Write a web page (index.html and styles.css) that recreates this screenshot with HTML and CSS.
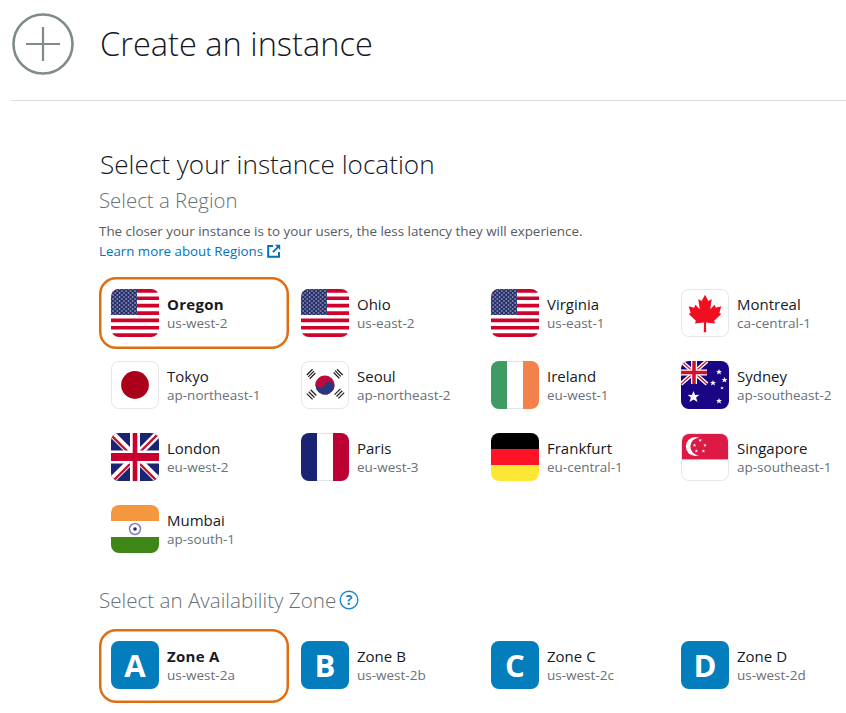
FILE: index.html
```html
<!DOCTYPE html>
<html lang="en">
<head>
<meta charset="utf-8">
<title>Create an instance</title>
<link rel="stylesheet" href="styles.css">
</head>
<body>
<svg class="defs" width="0" height="0" aria-hidden="true">
  <defs>
    <pattern id="stars" x="1" y="1" width="4.4" height="4" patternUnits="userSpaceOnUse">
      <circle cx="1" cy="1" r=".75" fill="#c9cde0"/>
      <circle cx="3.2" cy="3" r=".75" fill="#c9cde0"/>
    </pattern>
    <symbol id="us" viewBox="0 0 48 48">
      <rect width="48" height="48" fill="#fff"/>
      <path fill="#d0022b" d="M0 0h48v3.7H0zM0 7.4h48v3.7H0zM0 14.8h48v3.7H0zM0 22.2h48v3.7H0zM0 29.5h48v3.7H0zM0 36.9h48v3.7H0zM0 44.3h48V48H0z"/>
      <rect width="26" height="26" fill="#27306b"/>
      <rect width="26" height="26" fill="url(#stars)"/>
    </symbol>
    <polygon id="star" points="0,-3 .8,-1 3,-1.100 1.300,.3 2,2.500 0,1.200 -2,2.500 -1.300,.3 -3,-1.100 -.8,-1"/>
  </defs>
</svg>
<header class="page-head">
  <svg class="head-icon" viewBox="0 0 62 62" width="62" height="62"><circle cx="31" cy="31" r="29.5" fill="none" stroke="#7f8b8b" stroke-width="2.6"/><path d="M31 14v34M14 31h34" fill="none" stroke="#7f8b8b" stroke-width="2.2"/></svg>
  <h1 class="page-title">Create an instance</h1>
</header>
<main class="content">
  <h2 class="section-title">Select your instance location</h2>
  <h3 class="sub-title">Select a Region</h3>
  <p class="note">The closer your instance is to your users, the less latency they will experience.</p>
  <a class="learn" href="#">Learn more about Regions <svg class="ext" viewBox="0 0 14 14" width="14" height="14"><path d="M6 2H1.200v10.800H12V8" fill="none" stroke="#0073bb" stroke-width="2"/><path d="M8 .8h5.200V6L11.200 4 6.600 8.800 5.200 7.400 10 2.800z" fill="#0073bb"/></svg></a>

  <div class="cards">
    <div class="card selected">
      <span class="flag"><svg viewBox="0 0 48 48"><use href="#us"/></svg></span>
      <div class="label"><strong class="name">Oregon</strong><span class="code">us-west-2</span></div>
    </div>
    <div class="card">
      <span class="flag"><svg viewBox="0 0 48 48"><use href="#us"/></svg></span>
      <div class="label"><span class="name">Ohio</span><span class="code">us-east-2</span></div>
    </div>
    <div class="card">
      <span class="flag"><svg viewBox="0 0 48 48"><use href="#us"/></svg></span>
      <div class="label"><span class="name">Virginia</span><span class="code">us-east-1</span></div>
    </div>
    <div class="card">
      <span class="flag bordered"><svg viewBox="0 0 48 48"><polygon fill="#f00f21" points="24,5 27.500,11.500 31,9.500 29.500,20 34,15.500 35.300,18.500 41,17 39,24 41,25 33.500,32 34.500,35 25,34 25.300,44 22.700,44 23,34 13.500,35 14.500,32 7,25 9,24 7,17 12.700,18.500 14,15.500 18.500,20 17,9.500 20.500,11.500"/></svg></span>
      <div class="label"><span class="name">Montreal</span><span class="code">ca-central-1</span></div>
    </div>

    <div class="card">
      <span class="flag bordered"><svg viewBox="0 0 48 48"><circle cx="24" cy="24" r="14.500" fill="#ab0019"/></svg></span>
      <div class="label"><span class="name">Tokyo</span><span class="code">ap-northeast-1</span></div>
    </div>
    <div class="card">
      <span class="flag bordered"><svg viewBox="0 0 48 48"><g transform="rotate(20 24 24)"><circle cx="24" cy="24" r="10" fill="#bb0a3c"/><path fill="#26387f" d="M14 24a10 10 0 0 0 20 0z"/><circle cx="19" cy="24" r="5" fill="#bb0a3c"/><circle cx="29" cy="24" r="5" fill="#26387f"/></g><g stroke="#222" stroke-width="1.300" fill="none"><path d="M5 13.500l6-6M6.500 15.500l6-6M8 17.500l6-6"/><path d="M36.500 7.500l6 6M34.500 9l6 6M33 11l6 6"/><path d="M9 29l6 6M7 31l6 6M5 33l6 6"/><path d="M40 28l-6 6M42 30l-6 6M44 32l-6 6"/></g></svg></span>
      <div class="label"><span class="name">Seoul</span><span class="code">ap-northeast-2</span></div>
    </div>
    <div class="card">
      <span class="flag"><svg viewBox="0 0 48 48"><rect width="16" height="48" fill="#409a64"/><rect x="16" width="16" height="48" fill="#fff"/><rect x="32" width="16" height="48" fill="#f3814a"/><path d="M16 .5h16M16 47.500h16" stroke="#e4e4e4"/></svg></span>
      <div class="label"><span class="name">Ireland</span><span class="code">eu-west-1</span></div>
    </div>
    <div class="card">
      <span class="flag"><svg viewBox="0 0 48 48"><rect width="48" height="48" fill="#1a0684"/><path d="M0 0l26 23M26 0L0 23" stroke="#fff" stroke-width="4"/><path d="M0 0l26 23M26 0L0 23" stroke="#d0112b" stroke-width="1.300"/><path d="M13 0v23M0 11.500h26" stroke="#fff" stroke-width="6"/><path d="M13 0v23M0 11.500h26" stroke="#d0112b" stroke-width="3.500"/><g fill="#fff"><use href="#star" transform="translate(12.500 36) scale(2)"/><use href="#star" transform="translate(38 11)"/><use href="#star" transform="translate(32 22)"/><use href="#star" transform="translate(43.500 19)"/><use href="#star" transform="translate(41 27) scale(.6)"/><use href="#star" transform="translate(38 40)"/></g></svg></span>
      <div class="label"><span class="name">Sydney</span><span class="code">ap-southeast-2</span></div>
    </div>

    <div class="card">
      <span class="flag"><svg viewBox="0 0 48 48"><rect width="48" height="48" fill="#1a2472"/><path d="M0 0l48 48M48 0L0 48" stroke="#fff" stroke-width="7"/><path d="M-1 1l24 24M49 -1L25 23M1 49l24-24M47 49L23 25" stroke="#c8102e" stroke-width="2.400"/><path d="M24 0v48" stroke="#fff" stroke-width="10"/><path d="M0 24h48" stroke="#fff" stroke-width="13"/><path d="M24 0v48" stroke="#c8002f" stroke-width="4.600"/><path d="M0 24h48" stroke="#c8002f" stroke-width="8"/></svg></span>
      <div class="label"><span class="name">London</span><span class="code">eu-west-2</span></div>
    </div>
    <div class="card">
      <span class="flag"><svg viewBox="0 0 48 48"><rect width="16" height="48" fill="#1a2472"/><rect x="16" width="16" height="48" fill="#fff"/><rect x="32" width="16" height="48" fill="#bd0034"/><path d="M16 .5h16M16 47.500h16" stroke="#e4e4e4"/></svg></span>
      <div class="label"><span class="name">Paris</span><span class="code">eu-west-3</span></div>
    </div>
    <div class="card">
      <span class="flag"><svg viewBox="0 0 48 48"><rect width="48" height="16" fill="#000"/><rect y="16" width="48" height="16" fill="#ff1326"/><rect y="32" width="48" height="16" fill="#ffe835"/></svg></span>
      <div class="label"><span class="name">Frankfurt</span><span class="code">eu-central-1</span></div>
    </div>
    <div class="card">
      <span class="flag bordered"><svg viewBox="0 0 48 48"><rect x="-1" y="-1" width="50" height="27.500" fill="#dc1a45"/><circle cx="14" cy="13" r="10" fill="#fff"/><circle cx="18" cy="13" r="9.200" fill="#dc1a45"/><g fill="#fff"><use href="#star" transform="translate(19 6.700) scale(.6)"/><use href="#star" transform="translate(24 11.700) scale(.6)"/><use href="#star" transform="translate(22.300 17.700) scale(.6)"/><use href="#star" transform="translate(15 17.700) scale(.6)"/><use href="#star" transform="translate(13 11.700) scale(.6)"/></g></svg></span>
      <div class="label"><span class="name">Singapore</span><span class="code">ap-southeast-1</span></div>
    </div>

    <div class="card">
      <span class="flag"><svg viewBox="0 0 48 48"><rect width="48" height="16" fill="#f4973f"/><rect y="16" width="48" height="16" fill="#fff"/><rect y="32" width="48" height="16" fill="#3e8716"/><circle cx="24" cy="24" r="5.500" fill="none" stroke="#7f7fbf" stroke-width="1.500"/><circle cx="24" cy="24" r="1.800" fill="#23237f"/></svg></span>
      <div class="label"><span class="name">Mumbai</span><span class="code">ap-south-1</span></div>
    </div>
  </div>

  <h3 class="sub-title zone-title">Select an Availability Zone<svg class="help" viewBox="0 0 20 20" width="20" height="20"><circle cx="10" cy="10" r="8.800" fill="none" stroke="#1c86c8" stroke-width="1.400"/><text x="10" y="15" text-anchor="middle" class="help-mark">?</text></svg></h3>
  <div class="cards zones">
    <div class="card selected">
      <span class="badge">A</span>
      <div class="label"><strong class="name">Zone A</strong><span class="code">us-west-2a</span></div>
    </div>
    <div class="card">
      <span class="badge">B</span>
      <div class="label"><span class="name">Zone B</span><span class="code">us-west-2b</span></div>
    </div>
    <div class="card">
      <span class="badge">C</span>
      <div class="label"><span class="name">Zone C</span><span class="code">us-west-2c</span></div>
    </div>
    <div class="card">
      <span class="badge">D</span>
      <div class="label"><span class="name">Zone D</span><span class="code">us-west-2d</span></div>
    </div>
  </div>
</main>
</body>
</html>
```

FILE: styles.css
```css
* { box-sizing: border-box; }
html, body { margin: 0; padding: 0; }
body {
  background: #fff;
  color: #16191f;
  font-family: "Open Sans", "Liberation Sans", sans-serif;
  overflow: hidden;
  height: 713px;
}
.defs { display: block; height: 0; }
.page-head {
  display: flex;
  align-items: center;
  height: 101px;
  margin-left: 11px;
  padding: 0 0 12px 1px;
  border-bottom: 1px solid #d9dfe0;
}
.head-icon { flex: none; }
.page-title {
  margin: 0 0 0 26px;
  font-size: 32.600px;
  font-weight: 300;
  line-height: 44px;
}
.content { padding: 45px 0 0 99px; }
.section-title {
  margin: 0;
  font-size: 26.150px;
  font-weight: 300;
  line-height: 36px;
  padding-left: 1px;
}
.sub-title {
  margin: 0;
  color: #687078;
  font-size: 20.400px;
  font-weight: 300;
  line-height: 36px;
}
.note {
  margin: 5px 0 0;
  color: #545b64;
  font-size: 13.400px;
  line-height: 16px;
}
.learn {
  display: inline-flex;
  align-items: center;
  gap: 4px;
  color: #0073bb;
  text-decoration: none;
  font-size: 13.300px;
  line-height: 20px;
}
.cards {
  display: grid;
  grid-template-columns: repeat(4, 190px);
  grid-auto-rows: 72px;
  margin-top: 16px;
}
.card {
  display: flex;
  align-items: flex-start;
  gap: 8px;
  height: 71.500px;
  padding: 12px;
  border-radius: 17px;
}
.selected { box-shadow: inset 0 0 0 2.500px #df6e12; }
.flag {
  flex: none;
  display: block;
  width: 48px;
  height: 48px;
  border-radius: 8px;
  overflow: hidden;
}
.flag svg { display: block; width: 100%; height: 100%; }
.bordered { border: 1px solid #e4e6e8; }
.badge {
  flex: none;
  display: flex;
  align-items: center;
  justify-content: center;
  width: 48px;
  height: 48px;
  border-radius: 8px;
  background: #047dbd;
  color: #fff;
  font-size: 31px;
  font-weight: 700;
}
.label { display: flex; flex-direction: column; padding-top: 5px; }
.name { font-size: 15px; line-height: 20px; font-weight: 400; }
strong.name { font-weight: 700; letter-spacing: .3px; }
.code { color: #687078; font-size: 13.500px; line-height: 18px; }
.zone-title {
  display: flex;
  align-items: center;
  font-size: 20.600px;
  margin-top: 17px;
}
.zones { margin-top: 11px; }
.zones .card { height: 74px; }
.zones .label { padding-top: 5px; }
.help { margin-left: 3px; }
.help-mark { fill: #1c86c8; font-size: 14px; font-weight: 700; }
```
